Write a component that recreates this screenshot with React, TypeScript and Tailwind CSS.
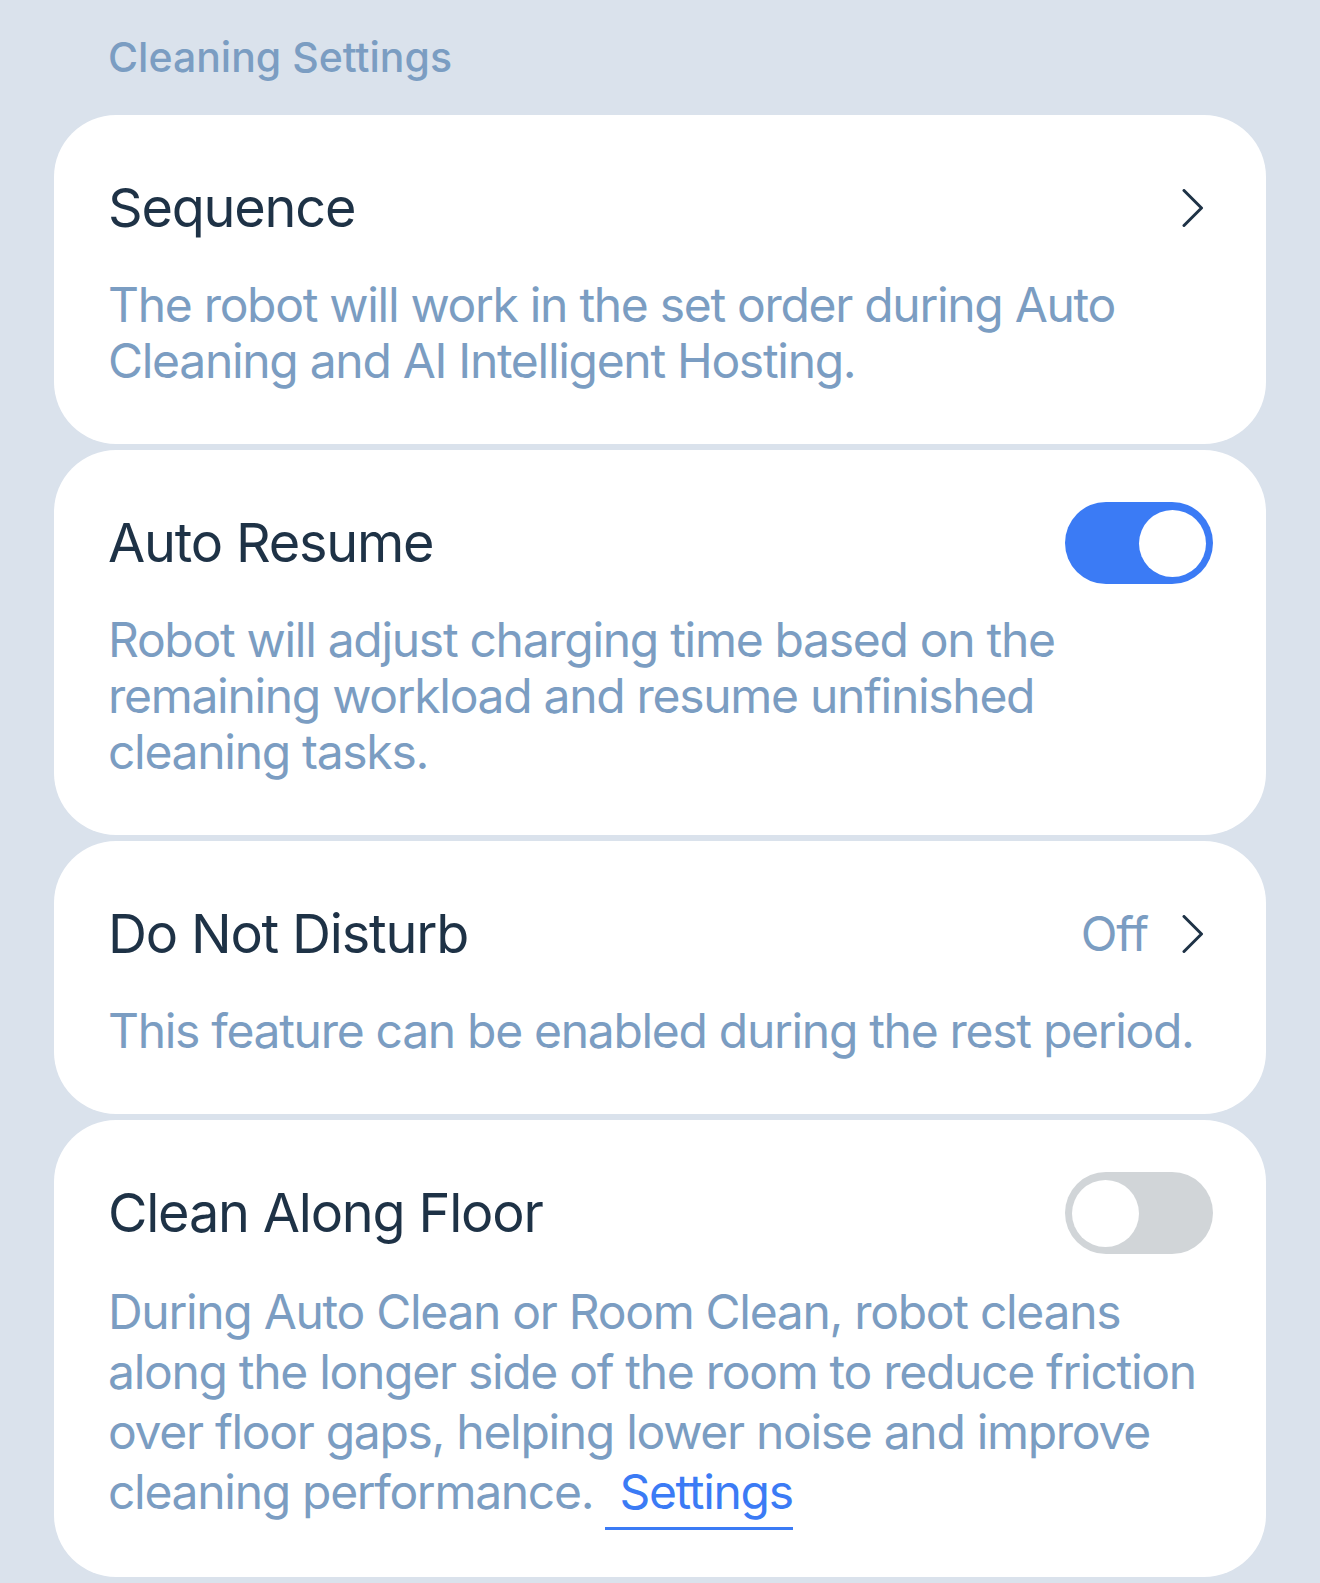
import React from "react";

const font = { fontFamily: "Inter, 'Noto Sans', 'Liberation Sans', sans-serif" };

function Chevron() {
  return (
    <svg width="22" height="38" viewBox="0 0 22 38" fill="none" className="shrink-0">
      <path d="M2 1.5 L19.5 19 L2 36.5" stroke="#1e3246" strokeWidth="3" strokeLinecap="round" strokeLinejoin="round" />
    </svg>
  );
}

function Toggle({ on }: { on: boolean }) {
  return (
    <div
      className={
        "flex h-[82px] w-[148px] shrink-0 items-center rounded-full px-[7px] " +
        (on ? "justify-end bg-[#3b7bf5]" : "justify-start bg-[#d1d5d8]")
      }
    >
      <div className="h-[67px] w-[67px] rounded-full bg-white" />
    </div>
  );
}

function Card({
  title,
  right,
  children,
  leading = "leading-[56px]",
}: {
  title: string;
  right: React.ReactNode;
  children: React.ReactNode;
  leading?: string;
}) {
  return (
    <div className="rounded-[62px] bg-white px-[54px] pb-[55px] pt-[61px]">
      <div className="flex h-[64px] items-center justify-between">
        <div className="text-[54px] leading-[64px] tracking-[-1.2px] text-[#1e3246]">{title}</div>
        {right}
      </div>
      <p className={"mt-[37px] text-[48px] tracking-[-1.3px] text-[#7b9dc2] " + leading}>{children}</p>
    </div>
  );
}

export default function App() {
  return (
    <div style={font} className="min-h-[1583px] w-full bg-[#dae2ec] px-[54px] pt-[29px]">
      <h2 className="pl-[54px] text-[41px] font-medium leading-[56px] text-[#7b9dc2]">Cleaning Settings</h2>
      <div className="mt-[30px] flex flex-col gap-[6px]">
        <Card title="Sequence" right={<div className="pr-[8px]"><Chevron /></div>}>
          The robot will work in the set order during Auto Cleaning and AI Intelligent Hosting.
        </Card>
        <Card title="Auto Resume" right={<div className="-mr-[1px]"><Toggle on /></div>}>
          Robot will adjust charging time based on the remaining workload and resume unfinished cleaning tasks.
        </Card>
        <Card
          title="Do Not Disturb"
          right={
            <div className="flex items-center gap-[34px] pr-[8px]">
              <span className="text-[48px] leading-[56px] tracking-[-1px] text-[#7b9dc2]">Off</span>
              <Chevron />
            </div>
          }
        >
          This feature can be enabled during the rest period.
        </Card>
        <Card title="Clean Along Floor" right={<div className="-mr-[1px]"><Toggle on={false} /></div>} leading="leading-[60px]">
          During Auto Clean or Room Clean, robot cleans along the longer side of the room to reduce friction over floor gaps, helping lower noise and improve cleaning performance.{" "}
          <span className="border-b-[3px] border-[#3b7bf5] pb-[6px] pl-[14px] text-[#3b7bf5]">Settings</span>
        </Card>
        <div className="h-[80px] rounded-t-[62px] bg-white" />
      </div>
    </div>
  );
}
